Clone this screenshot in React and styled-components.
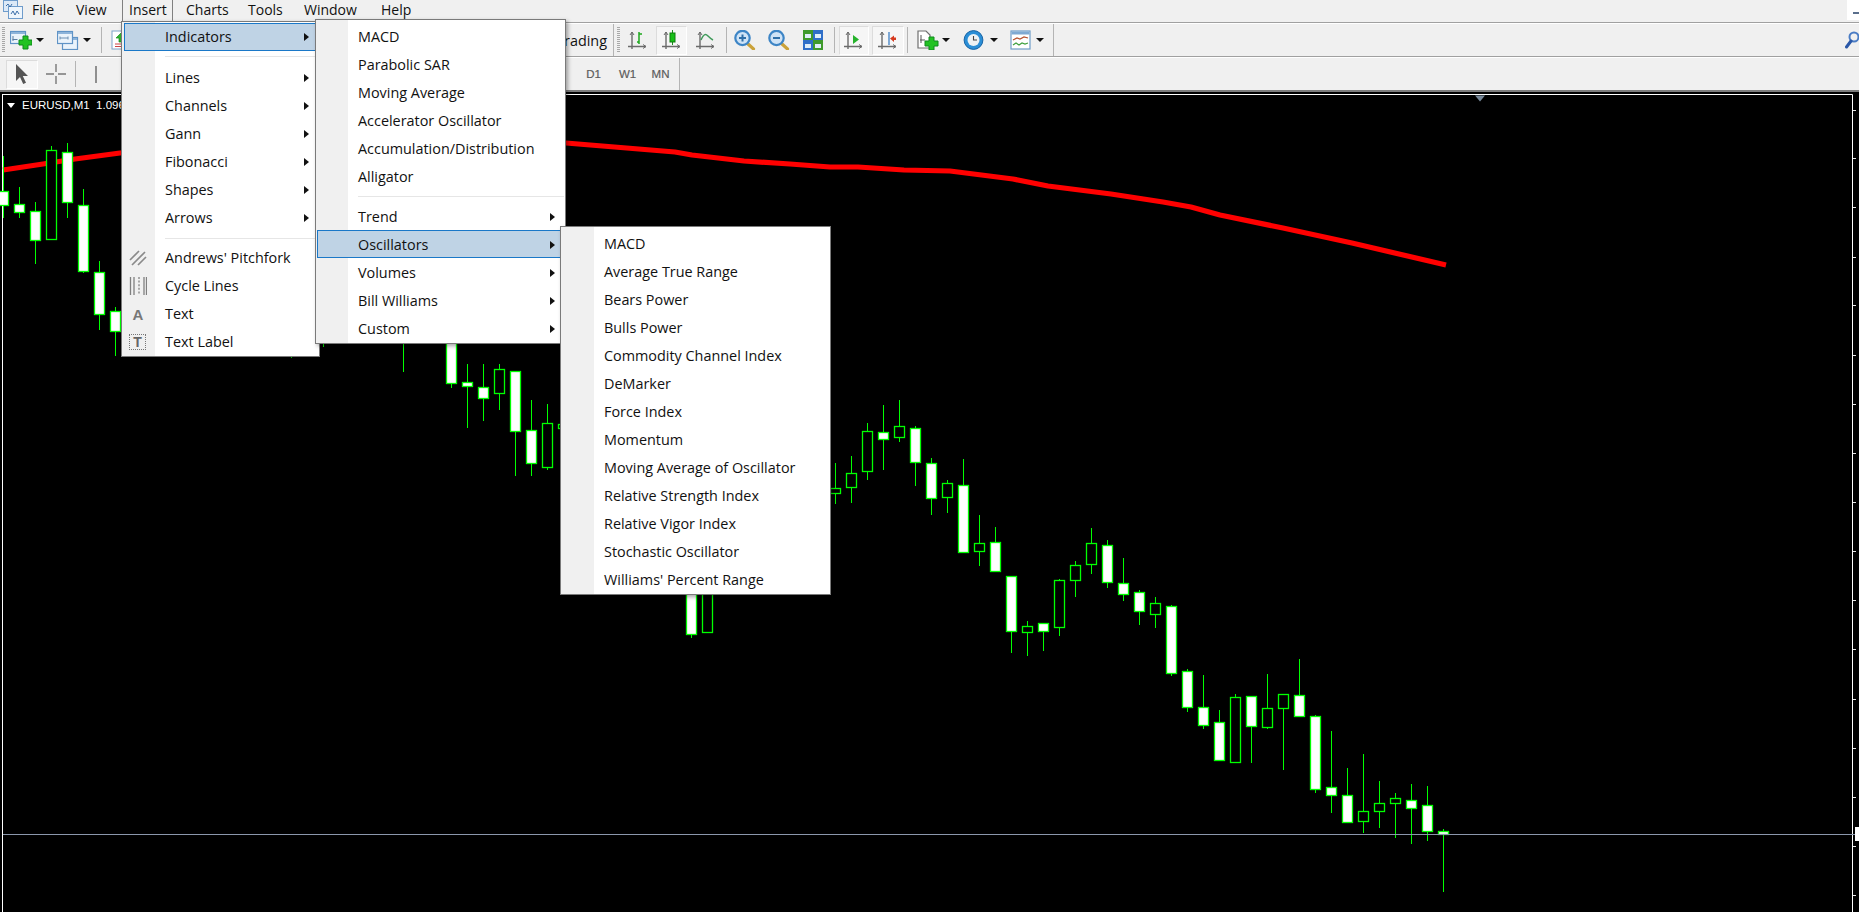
import React from "react";
import styled, { createGlobalStyle } from "styled-components";

const Global = createGlobalStyle`
  html, body { margin: 0; padding: 0; width: 1859px; height: 912px; overflow: hidden; background: #000; }
  #root { width: 1859px; height: 912px; }
  * { box-sizing: border-box; }
`;

const UI_FONT = `"Open Sans", "Noto Sans", "Liberation Sans", sans-serif`;

const Page = styled.div`
  position: relative;
  width: 1859px;
  height: 912px;
  display: flex;
  flex-direction: column;
  overflow: hidden;
  font-family: ${UI_FONT};
  background: #f0f0f0;
`;

const MenuBar = styled.div`
  height: 23px;
  flex: none;
  display: flex;
  align-items: flex-start;
  background: #f0f0f0;
  border-bottom: 1px solid #a0a0a0;
`;
const Logo = styled.div`
  width: 32px;
  height: 20px;
  padding-left: 3px;
  flex: none;
`;
const BarItem = styled.div`
  width: ${(p) => p.$w}px;
  margin-left: ${(p) => p.$ml || 0}px;
  padding-left: ${(p) => p.$pl || 0}px;
  height: 22px;
  flex: none;
  font-size: 14px;
  line-height: 20px;
  color: #111;
  ${(p) => p.$open && `border-left: 1px solid #808080; border-right: 1px solid #808080;`}
`;
const WindowCorner = styled.div`
  margin-left: auto;
  width: 12px;
  height: 20px;
  background: #fff;
  padding: 12px 0 0 6px;
`;
const WindowDash = styled.div`
  width: 6px;
  height: 2px;
  background: #5a6f8c;
`;

const ToolBar = styled.div`
  height: ${(p) => p.$h}px;
  flex: none;
  display: flex;
  align-items: center;
  background: #f0f0f0;
  border-top: 1px solid #fff;
  border-bottom: ${(p) => (p.$last ? "2px solid #7d7d7d" : "1px solid #a0a0a0")};
`;
const LeftSection = styled.div`
  width: ${(p) => p.$w}px;
  height: 100%;
  flex: none;
  display: flex;
  align-items: center;
  border-right: 1px solid #b4b4b4;
`;
const Section = styled.div`
  height: 100%;
  flex: none;
  display: flex;
  align-items: center;
  border-right: 1px solid #b4b4b4;
`;
const Push = styled.div`
  margin-left: auto;
  display: flex;
  align-items: center;
`;
const Grip = styled.div`
  width: 3px;
  height: 26px;
  margin-left: ${(p) => p.$ml || 0}px;
  flex: none;
  background: repeating-linear-gradient(to bottom, #a8a8a8 0 1px, transparent 1px 2px);
`;
const Tool = styled.div`
  width: ${(p) => p.$w || 22}px;
  height: ${(p) => (p.$pressed ? 29 : 22)}px;
  margin-left: ${(p) => p.$ml || 0}px;
  flex: none;
  display: flex;
  align-items: center;
  justify-content: center;
  ${(p) =>
    p.$pressed &&
    `background: #f6f6f6; border: 1px solid #dcdcdc; border-bottom-color: #fff; border-right-color: #fff;`}
`;
const Caret = styled.div`
  width: 0;
  height: 0;
  margin-left: ${(p) => p.$ml || 0}px;
  flex: none;
  border-left: 4px solid transparent;
  border-right: 4px solid transparent;
  border-top: 4px solid #111;
`;
const Sep = styled.div`
  width: 1px;
  height: 26px;
  margin-left: ${(p) => p.$ml || 0}px;
  flex: none;
  background: #b4b4b4;
`;
const TextTool = styled.div`
  margin-right: 6px;
  flex: none;
  font-size: 14.4px;
  color: #111;
  white-space: nowrap;
`;
const Frames = styled.div`
  margin-left: auto;
  display: flex;
  padding-right: 2px;
`;
const Frame = styled.div`
  width: ${(p) => p.$w}px;
  text-align: center;
  font-family: "Liberation Sans", sans-serif;
  font-size: 11.5px;
  color: #5c5c5c;
  -webkit-text-stroke: 0.2px #5c5c5c;
`;

const Chart = styled.div`
  flex: 1;
  position: relative;
  background: #000;
`;
const ChartSvg = styled.svg`
  display: block;
  width: 1859px;
  height: 820px;
`;
const ChartLabel = styled.div`
  position: absolute;
  left: 7px;
  top: 6px;
  display: flex;
  align-items: center;
  color: #fff;
  font-family: "Liberation Sans", sans-serif;
  font-size: 11.5px;
  line-height: 14px;
  white-space: pre;
`;
const LabelMark = styled.div`
  width: 0;
  height: 0;
  flex: none;
  margin-right: 7px;
  border-left: 4px solid transparent;
  border-right: 4px solid transparent;
  border-top: 5px solid #fff;
`;

const Menu = styled.div`
  position: absolute;
  left: ${(p) => p.$left}px;
  top: ${(p) => p.$top}px;
  width: ${(p) => p.$w}px;
  padding: ${(p) => p.$padTop}px 1px ${(p) => p.$padBottom}px ${(p) => p.$padLeft}px;
  background: linear-gradient(to right, #f0f0f0 ${(p) => p.$gutter}px, #fff ${(p) => p.$gutter}px);
  border: 1px solid #7a7a7a;
  box-shadow: 2px 2px 4px rgba(0, 0, 0, 0.35);
`;
const Row = styled.div`
  height: 28px;
  padding-bottom: ${(p) => (p.$low ? 0 : 2)}px;
  display: flex;
  align-items: center;
  font-size: 14.4px;
  color: #111;
  white-space: nowrap;
  border: 1px solid ${(p) => (p.$active ? "#1a78c8" : "transparent")};
  background: ${(p) => (p.$active ? "#bfd3e5" : "transparent")};
`;
const IconSlot = styled.div`
  width: 40px;
  flex: none;
  padding-left: 4px;
  padding-top: 2px;
  display: flex;
  align-items: center;
`;
const SubArrow = styled.div`
  margin-left: auto;
  margin-right: 8px;
  margin-top: 2px;
  width: 0;
  height: 0;
  border-top: 4px solid transparent;
  border-bottom: 4px solid transparent;
  border-left: 5px solid #111;
`;
const MenuSep = styled.div`
  height: ${(p) => p.$h}px;
  margin-left: 41px;
  display: flex;
  align-items: ${(p) => (p.$top ? "flex-start" : "center")};
  padding-top: ${(p) => (p.$top ? 5 : 0)}px;
  &::after {
    content: "";
    display: block;
    width: 100%;
    height: 1px;
    background: #e6e6e6;
  }
`;

/* ---------- icons ---------- */
const Axes = ({ c = "#6b6b6b" }) => (
  <g stroke={c} strokeWidth="1.4" fill="none">
    <path d="M5 2v17M1 16.5h18" />
    <path d="M3 5L5 2l2 3M16 14.5l3 2-3 2" strokeWidth="1" />
  </g>
);
const Ico = ({ w = 22, h = 20, children }) => (
  <svg width={w} height={h} viewBox={`0 0 ${w} ${h}`} style={{ display: "block", flex: "none" }}>
    {children}
  </svg>
);
const GreenPlus = ({ x, y, s = 5.5, t = 5 }) => (
  <path
    d={`M${x - t / 2} ${y - s - t / 2}h${t}v${s}h${s}v${t}h-${s}v${s}h-${t}v-${s}h-${s}v-${t}h${s}z`}
    fill="#22c222"
    stroke="#0f8a1c"
    strokeWidth="1"
  />
);
const WindowBox = ({ x, y, w, h }) => (
  <g>
    <rect x={x + 0.5} y={y + 0.5} width={w} height={h} fill="#eaf3fb" stroke="#5f93c6" strokeWidth="1.2" />
    <rect x={x + 1} y={y + 1} width={w - 1} height="2" fill="#8db4da" />
  </g>
);
const NewChartIcon = () => (
  <Ico>
    <WindowBox x={0} y={1} w={15} h={12} />
    <path d="M3 6v5M2.5 9.5h5" stroke="#5b7fa3" fill="none" />
    <GreenPlus x={15.5} y={12.5} s={4} t={5} />
  </Ico>
);
const ProfilesIcon = () => (
  <Ico>
    <WindowBox x={5} y={7} w={15} h={12} />
    <WindowBox x={0} y={1} w={15} h={12} />
    <path d="M3 8h8M3 6.5v3M11 6.5v3" stroke="#6b8fb3" fill="none" />
  </Ico>
);
const OrderIcon = () => (
  <Ico>
    <rect x="1" y="1" width="18" height="18" fill="#fff" stroke="#7da3c8" />
    <path d="M10 3l5 5h-3v4H8V8H5z" fill="#2fb52f" stroke="#168a1a" strokeWidth="0.7" />
    <path d="M4 14h12M4 16.5h12" stroke="#c44" />
  </Ico>
);
const CursorIcon = () => (
  <Ico w={16} h={22}>
    <path d="M2 1l0 17 4-4 3.2 7 2.8-1.3-3.2-6.7 5.2 0z" fill="#555" />
  </Ico>
);
const CrossIcon = () => (
  <Ico w={20} h={20}>
    <path d="M10 0v8M10 12v8M0 10h8M12 10h8" stroke="#777" strokeWidth="1.4" />
  </Ico>
);
const VLineIcon = () => (
  <Ico w={4} h={17}>
    <path d="M2 0v17" stroke="#777" strokeWidth="1.6" />
  </Ico>
);
const BarsIcon = () => (
  <Ico>
    <Axes />
    <path d="M12 2v12M10 12h2M12 4h3" stroke="#1ca81c" strokeWidth="1.5" fill="none" />
  </Ico>
);
const CandleIcon = () => (
  <Ico>
    <Axes />
    <path d="M11.5 0v15" stroke="#1c8f1c" />
    <rect x="9" y="3" width="5" height="9" fill="#17c017" stroke="#0e7d0e" />
  </Ico>
);
const LineIcon = () => (
  <Ico>
    <Axes />
    <path d="M6 10C9 3 11 4 13 6s3 3 5 4" stroke="#3f9a5a" strokeWidth="1.5" fill="none" />
  </Ico>
);
const Magnifier = ({ minus }) => (
  <Ico>
    <path d="M13.5 13.5l6 5.5" stroke="#caa23a" strokeWidth="3.2" strokeLinecap="round" />
    <circle cx="8.5" cy="8" r="7.2" fill="#cfe3f6" stroke="#3d85c6" strokeWidth="2.2" />
    <path d={minus ? "M5 8h7" : "M5 8h7M8.5 4.5v7"} stroke="#2f6fa8" strokeWidth="2" />
  </Ico>
);
const TileIcon = () => (
  <Ico>
    <rect x="0" y="0" width="10" height="10" fill="#3f9a2c" />
    <rect x="10" y="0" width="10" height="10" fill="#2f6fc8" />
    <rect x="0" y="10" width="10" height="10" fill="#2f6fc8" />
    <rect x="10" y="10" width="10" height="10" fill="#3f9a2c" />
    <rect x="2" y="4" width="6" height="4" fill="#dfeef9" />
    <rect x="12" y="4" width="6" height="4" fill="#dfeef9" />
    <rect x="2" y="14" width="6" height="4" fill="#dfeef9" />
    <rect x="12" y="14" width="6" height="4" fill="#dfeef9" />
  </Ico>
);
const AutoScrollIcon = () => (
  <Ico>
    <Axes />
    <path d="M10 5l6 4.5-6 4.5z" fill="#27b32c" />
  </Ico>
);
const ShiftIcon = () => (
  <Ico>
    <Axes />
    <path d="M12 2v13" stroke="#3d7fc4" strokeWidth="1.3" />
    <path d="M13 8.5l4-3v2h2v2.5h-2v2z" fill="#d63a1f" />
  </Ico>
);
const TemplateIcon = () => (
  <Ico>
    <path d="M1 1h8l4 4v13H1z" fill="#fff" stroke="#6f6f6f" strokeWidth="1.2" />
    <path d="M4 5v8M3 10h5" stroke="#555" fill="none" />
    <GreenPlus x={14.5} y={13.5} s={4} t={5} />
  </Ico>
);
const ClockIcon = () => (
  <Ico>
    <circle cx="10.5" cy="10" r="9.4" fill="#2a8ed6" stroke="#1763a5" />
    <circle cx="10.5" cy="10" r="6" fill="#eef2f4" />
    <path d="M10.5 6v4h3.5" stroke="#444" strokeWidth="1.1" fill="none" />
  </Ico>
);
const IndicatorsIcon = () => (
  <Ico>
    <rect x="1" y="1" width="19" height="18" fill="#fff" stroke="#6f9dc8" strokeWidth="1.2" />
    <rect x="1.5" y="1.5" width="18" height="3" fill="#7ea9d2" />
    <path d="M3 10l4-2 3 1 4-2 4 1" stroke="#b5502c" strokeWidth="1.2" fill="none" />
    <path d="M3 15l3-2 3 2 3-2 3 1 3-1" stroke="#3ea03e" strokeWidth="1.2" fill="none" />
  </Ico>
);
const SearchIcon = () => (
  <Ico w={14} h={18}>
    <circle cx="9" cy="6" r="4.5" fill="none" stroke="#4a7cc4" strokeWidth="2" />
    <path d="M6 10L1.5 16" stroke="#2a58a8" strokeWidth="3" strokeLinecap="round" />
  </Ico>
);
const PitchforkIcon = () => (
  <Ico w={18} h={18}>
    <path d="M1 11L10 2M3 16L16 3M9 16l8-8" stroke="#8a8a8a" strokeWidth="1.7" />
  </Ico>
);
const CycleIcon = () => (
  <Ico w={18} h={20}>
    <path d="M1.5 1v18M5 1v18M15 1v18M17.5 1v18" stroke="#808080" strokeWidth="1.3" />
    <path d="M10 1v18" stroke="#808080" strokeWidth="1.3" strokeDasharray="2 1.6" />
  </Ico>
);
const LetterIcon = styled.span`
  width: 18px;
  text-align: center;
  font-family: "Liberation Sans", sans-serif;
  font-weight: 700;
  font-size: 15px;
  color: #777;
`;
const LabelIcon = styled.span`
  width: 17px;
  height: 16px;
  text-align: center;
  font-family: "Liberation Sans", sans-serif;
  font-weight: 700;
  font-size: 14px;
  line-height: 14px;
  color: #666;
  border: 1px dotted #777;
`;
const LogoIcon = () => (
  <Ico w={20} h={19}>
    <rect x="0.5" y="0.5" width="14" height="11" fill="#dce9f7" stroke="#6f9ccb" />
    <rect x="5.5" y="6.5" width="14" height="12" fill="#eef5fc" stroke="#6f9ccb" />
    <path d="M3 6l2-2 2 3 2-3M8 14l2-3 2 4 2-4 2 3" stroke="#3b6ea8" fill="none" />
  </Ico>
);

/* ---------- chart data: [index, wickTop, wickBottom, bodyTop, bodyBottom, filled] ---------- */
const candles = [
  [0, 156, 218, 191, 205, 1], [1, 187, 218, 204, 212, 1], [2, 202, 264, 211, 240, 1],
  [3, 146, 239, 150, 239, 0], [4, 143, 218, 152, 202, 1], [5, 189, 273, 205, 271, 1],
  [6, 261, 330, 272, 314, 1], [7, 307, 356, 311, 331, 1],
  [18, 330, 358, 330, 345, 1], [20, 300, 347, 300, 320, 1],
  [25, 300, 372, 300, 330, 1], [28, 320, 388, 320, 383, 1],
  [29, 364, 428, 382, 386, 1], [30, 364, 421, 387, 398, 1], [31, 364, 410, 369, 393, 0],
  [32, 371, 476, 371, 431, 1], [33, 400, 476, 430, 463, 1], [34, 404, 470, 423, 467, 0],
  [35, 410, 440, 424, 428, 0],
  [43, 580, 638, 580, 634, 1], [44, 580, 632, 580, 632, 0],
  [52, 463, 504, 488, 493, 0], [53, 456, 503, 473, 487, 0], [54, 423, 480, 431, 471, 0],
  [55, 405, 470, 432, 439, 1], [56, 400, 442, 426, 437, 0], [57, 426, 486, 428, 462, 1],
  [58, 458, 515, 463, 498, 1], [59, 480, 513, 483, 497, 0], [60, 459, 553, 485, 552, 1],
  [61, 515, 566, 543, 551, 0], [62, 527, 572, 542, 571, 1], [63, 576, 653, 576, 631, 1],
  [64, 621, 656, 626, 632, 0], [65, 623, 651, 623, 631, 1], [66, 579, 636, 580, 627, 0],
  [67, 561, 597, 565, 580, 0], [68, 528, 574, 543, 564, 0], [69, 540, 588, 545, 582, 1],
  [70, 558, 601, 583, 594, 1], [71, 590, 625, 592, 611, 1], [72, 597, 628, 603, 614, 0],
  [73, 605, 676, 606, 673, 1], [74, 669, 712, 671, 707, 1], [75, 675, 729, 707, 725, 1],
  [76, 710, 761, 722, 760, 1], [77, 694, 762, 697, 762, 0], [78, 696, 763, 696, 726, 1],
  [79, 674, 729, 708, 727, 0], [80, 694, 770, 694, 708, 0], [81, 659, 716, 695, 716, 1],
  [82, 715, 793, 716, 789, 1], [83, 731, 813, 787, 795, 1], [84, 768, 822, 795, 822, 1],
  [85, 754, 833, 811, 821, 0], [86, 781, 828, 803, 811, 0], [87, 793, 838, 798, 803, 0],
  [88, 784, 844, 800, 808, 1], [89, 786, 841, 805, 831, 1], [90, 829, 892, 831, 834, 1],
];
const maLine =
  "3,170 43,164 75,159 120,153 300,141 477,141 566,143 675,152 692,155 744,161 790,164 830,167 858,167 904,170 950,171 1013,179 1048,186 1111,194 1163,202 1191,207 1220,215 1283,228 1352,243 1446,265";
const ticks = [110, 158, 207, 257, 305, 355, 404, 453, 502, 551, 600, 649, 699, 748, 797, 846, 895];

const Candle = ({ d }) => {
  const [k, wt, wb, bt, bb, filled] = d;
  const cx = 3 + 16 * k;
  return (
    <g>
      <line x1={cx + 0.5} x2={cx + 0.5} y1={wt} y2={wb} stroke="#00ff00" strokeWidth="1" />
      <rect
        x={cx - 4.5}
        y={bt + 0.5}
        width="10"
        height={bb - bt}
        fill={filled ? "#fff" : "#000"}
        stroke="#00ff00"
        strokeWidth="1.3"
      />
    </g>
  );
};

const ChartDrawing = () => (
  <ChartSvg viewBox="0 92 1859 820">
    <rect x="0" y="92" width="1859" height="820" fill="#000" />
    <path d="M2.5 94.5V912M2 94.5H1852.5V912" stroke="#fff" fill="none" />
    {ticks.map((y) => (
      <line key={y} x1="1853" x2="1856" y1={y + 0.5} y2={y + 0.5} stroke="#e8e8e8" />
    ))}
    <path d="M1475 95.5h10l-5 6z" fill="#778899" />
    <polyline points={maLine} fill="none" stroke="#ff0000" strokeWidth="5.2" strokeLinejoin="round" />
    {candles.map((d) => (
      <Candle key={d[0]} d={d} />
    ))}
    <line x1="3" x2="1855" y1="834.5" y2="834.5" stroke="#8b97ab" />
    <rect x="1855" y="827" width="4" height="14" fill="#fff" />
  </ChartSvg>
);

const menu1Top = ["Lines", "Channels", "Gann", "Fibonacci", "Shapes", "Arrows"];
const menu2A = ["MACD", "Parabolic SAR", "Moving Average", "Accelerator Oscillator", "Accumulation/Distribution", "Alligator"];
const menu2B = ["Trend", "Oscillators", "Volumes", "Bill Williams", "Custom"];
const menu3 = [
  "MACD", "Average True Range", "Bears Power", "Bulls Power", "Commodity Channel Index", "DeMarker",
  "Force Index", "Momentum", "Moving Average of Oscillator", "Relative Strength Index",
  "Relative Vigor Index", "Stochastic Oscillator", "Williams' Percent Range",
];

const MenuRow = ({ label, icon, active, arrow, low }) => (
  <Row $active={active} $low={low}>
    <IconSlot>{icon}</IconSlot>
    {label}
    {arrow && <SubArrow />}
  </Row>
);

export default function App() {
  return (
    <Page>
      <Global />
      <MenuBar>
        <Logo><LogoIcon /></Logo>
        <BarItem $w={44}>File</BarItem>
        <BarItem $w={46}>View</BarItem>
        <BarItem $w={51} $pl={6} $open>Insert</BarItem>
        <BarItem $w={62} $ml={13}>Charts</BarItem>
        <BarItem $w={56}>Tools</BarItem>
        <BarItem $w={77}>Window</BarItem>
        <BarItem $w={50}>Help</BarItem>
        <WindowCorner><WindowDash /></WindowCorner>
      </MenuBar>

      <ToolBar $h={34}>
        <LeftSection $w={614}>
          <Grip $ml={2} />
          <Tool $ml={5}><NewChartIcon /></Tool>
          <Caret $ml={4} />
          <Tool $ml={13}><ProfilesIcon /></Tool>
          <Caret $ml={4} />
          <Sep $ml={10} />
          <Tool $ml={9}><OrderIcon /></Tool>
          <Push>
            <TextTool>AutoTrading</TextTool>
          </Push>
        </LeftSection>
        <Section>
          <Grip $ml={3} />
          <Tool $ml={7}><BarsIcon /></Tool>
          <Tool $ml={7} $w={31} $pressed><CandleIcon /></Tool>
          <Tool $ml={8}><LineIcon /></Tool>
          <Sep $ml={9} />
          <Tool $ml={7}><Magnifier /></Tool>
          <Tool $ml={12}><Magnifier minus /></Tool>
          <Tool $ml={13}><TileIcon /></Tool>
          <Sep $ml={9} />
          <Tool $ml={4} $w={30} $pressed><AutoScrollIcon /></Tool>
          <Tool $ml={3} $w={32} $pressed><ShiftIcon /></Tool>
          <Sep $ml={3} />
          <Tool $ml={9}><TemplateIcon /></Tool>
          <Caret $ml={3} />
          <Tool $ml={13}><ClockIcon /></Tool>
          <Caret $ml={5} />
          <Tool $ml={12}><IndicatorsIcon /></Tool>
          <Caret $ml={4} />
          <Tool $w={9} />
        </Section>
        <Push><SearchIcon /></Push>
      </ToolBar>

      <ToolBar $h={35} $last>
        <LeftSection $w={680}>
          <Tool $ml={6} $w={32} $pressed><CursorIcon /></Tool>
          <Tool $ml={7} $w={22}><CrossIcon /></Tool>
          <Sep $ml={8} />
          <Tool $ml={9} $w={22}><VLineIcon /></Tool>
          <Frames>
            <Frame $w={35}>D1</Frame>
            <Frame $w={33}>W1</Frame>
            <Frame $w={33}>MN</Frame>
          </Frames>
        </LeftSection>
      </ToolBar>

      <Chart>
        <ChartDrawing />
        <ChartLabel>
          <LabelMark />
          {"EURUSD,M1  1.09603"}
        </ChartLabel>
      </Chart>

      <Menu $left={121} $top={21} $w={199} $padTop={1} $padBottom={0} $padLeft={2} $gutter={33}>
        <MenuRow label="Indicators" active arrow />
        <MenuSep $h={13} $top />
        {menu1Top.map((t) => <MenuRow key={t} label={t} arrow />)}
        <MenuSep $h={12} />
        <MenuRow label="Andrews' Pitchfork" icon={<PitchforkIcon />} />
        <MenuRow label="Cycle Lines" icon={<CycleIcon />} />
        <MenuRow label="Text" icon={<LetterIcon>A</LetterIcon>} />
        <MenuRow label="Text Label" icon={<LabelIcon>T</LabelIcon>} />
      </Menu>

      <Menu $left={315} $top={19} $w={251} $padTop={3} $padBottom={1} $padLeft={1} $gutter={32}>
        {menu2A.map((t) => <MenuRow key={t} label={t} />)}
        <MenuSep $h={11} />
        {menu2B.map((t) => <MenuRow key={t} label={t} arrow low active={t === "Oscillators"} />)}
      </Menu>

      <Menu $left={560} $top={226} $w={271} $padTop={3} $padBottom={0} $padLeft={2} $gutter={33}>
        {menu3.map((t) => <MenuRow key={t} label={t} />)}
      </Menu>
    </Page>
  );
}
